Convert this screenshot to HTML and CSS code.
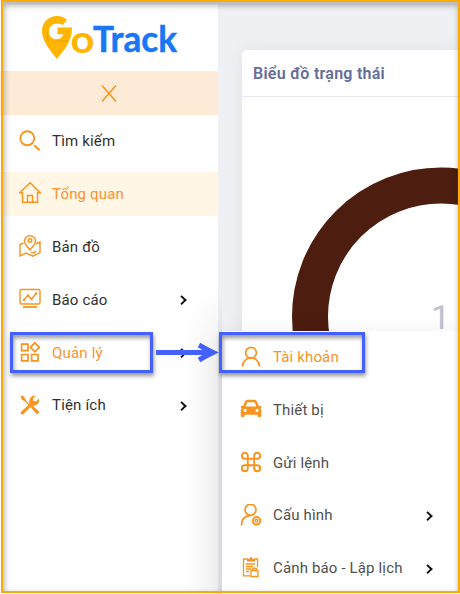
FILE: index.html
```html
<!DOCTYPE html>
<html lang="vi">
<head>
<meta charset="utf-8">
<title>GoTrack</title>
<link rel="stylesheet" href="styles.css">
</head>
<body>
<div class="app">
  <aside class="sidebar">
    <div class="brand">
      <svg class="logo" width="138" height="48" viewBox="0 0 138 48">
        <path class="pin" d="M25 6C21.500 2.800 18.500 2 15 2C6.500 2 0 8.500 0 17C0 27 8 36 14.800 45C22 36 30 28 30 13.500H15.500V20.300H21.500C20 23.500 17.500 25.300 14.500 25.300C10 25.300 7 22 7 17.500C7 13 10.500 9.500 15 9.500C17 9.500 19 10 20.500 11Z"/>
        <path class="pin-shade" d="M6.500 15C5.500 19 5.500 23 7 28L5.500 25C4.500 21 5 18 6.500 15ZM12 25.200C17 26.800 21 26.800 26 26.500L25 27.300C20 28 16 27 12 25.200Z"/>
        <text class="logo-o" x="28.500" y="38.500" textLength="24" lengthAdjust="spacingAndGlyphs">o</text>
        <text class="logo-track" x="51" y="38.300" textLength="84" lengthAdjust="spacingAndGlyphs">Track</text>
      </svg>
    </div>
    <div class="close"><svg width="16" height="17" viewBox="0 0 16 17"><path d="M1 .5L15 16.500M15 .5L1 16.500"/></svg></div>
    <nav class="menu">
      <a class="item"><svg class="icon" viewBox="0 0 22 22"><circle cx="8.300" cy="8.300" r="7" stroke-width="1.900"/><path stroke-width="2" d="M15.300 15.300L20.500 20.300"/></svg><span>Tìm kiếm</span></a>
      <a class="item active"><svg class="icon up" viewBox="0 0 22 22"><path d="M3.500 10.800H.8L11 .8 21.200 10.800H18.500V20.200H3.500ZM8.500 20V13.500H13.500V20"/></svg><span>Tổng quan</span></a>
      <a class="item"><svg class="icon up" viewBox="0 0 22 22"><path d="M11 15C8 11 5.500 9 5.500 6A5.500 5.200 0 0 1 16.500 6C16.500 9 14 11 11 15Z"/><circle cx="11" cy="5.500" r="1.800"/><path d="M4.500 8L1 9.500V21L7 18 14 21.200 21 17.500V7L17 9M12 17Q15 19 17 16"/></svg><span>Bản đồ</span></a>
      <a class="item"><svg class="icon up" viewBox="0 0 22 22"><rect x="1" y="1.500" width="20" height="14.500" rx="1.500"/><path d="M4 19H18" stroke-width="1.800"/><path d="M5 12L9 7.500 12.500 11 17 5.500"/><g class="solid"><circle cx="5" cy="12" r="1.200"/><circle cx="9" cy="7.500" r="1.200"/><circle cx="12.500" cy="11" r="1.200"/><circle cx="17" cy="5.500" r="1.200"/></g></svg><span>Báo cáo</span><i class="chevron"></i></a>
      <a class="item current"><svg class="icon up" viewBox="0 0 22 22"><path stroke-width="1.700" d="M2.600 3.200H9V9.600H2.600ZM2.600 13.500H9V19.900H2.600ZM12.600 13.500H19V19.900H12.600ZM15.900 1.800L20.400 6.300 15.900 10.800 11.400 6.300Z"/></svg><span>Quản lý</span><i class="chevron"></i></a>
      <a class="item"><svg class="icon" viewBox="0 0 22 22"><path class="solid" d="M1.500 1.500L5 2.500 7 6.500 10.500 10 9.500 11 6 7.500 2.500 5.500ZM11.500 13L13.500 11.500 20.500 18 18 20.500ZM1.800 18L10.500 10C9.500 5 12 1 17 1.500L14 4.500 14.500 7 17 7.500 20 4.500C21 9 17.500 12.500 13 11.500L4.200 20.300C2.500 21 1 19.500 1.800 18Z"/></svg><span>Tiện ích</span><i class="chevron"></i></a>
    </nav>
  </aside>
  <main class="content">
    <section class="card">
      <h2 class="card-title">Biểu đồ trạng thái</h2>
      <div class="chart">
        <svg width="218" height="300" viewBox="0 0 218 300"><circle class="ring" cx="199" cy="219.500" r="131"/><text class="total" x="189" y="232">1</text></svg>
      </div>
    </section>
  </main>
</div>
<div class="scroll-shade"></div>
<nav class="submenu">
  <a class="item current"><svg class="icon" viewBox="0 0 22 22"><circle cx="11" cy="6.700" r="5.400" stroke-width="1.700"/><path stroke-width="1.700" d="M2.500 20.500C3 9 19 9 19.500 20.500"/></svg><span>Tài khoản</span></a>
  <a class="item"><svg class="icon up" viewBox="0 0 22 22"><path class="solid" fill-rule="evenodd" d="M3.200 8L4.700 4Q5.500 1.700 8 1.700H14Q16.500 1.700 17.300 4L18.800 8H21V10H20.300L21.300 12V17.500Q21.300 19.300 19.300 19.300 17.300 19.300 17.300 16.800H4.700Q4.700 19.300 2.700 19.300 .7 19.300 .7 17.500V12L1.700 10H1V8ZM5.700 8.500H16.300L15 5Q14.700 4.300 14 4.300H8Q7.300 4.300 7 5ZM5 10.800A1.600 1.600 0 1 0 5 14 1.600 1.600 0 1 0 5 10.800ZM17 10.800A1.600 1.600 0 1 0 17 14 1.600 1.600 0 1 0 17 10.800Z"/></svg><span>Thiết bị</span></a>
  <a class="item"><svg class="icon up" viewBox="0 0 22 22"><path stroke-width="1.900" d="M7.800 7.800V4.800A3 3 0 1 0 4.800 7.800H17.200A3 3 0 1 0 14.200 4.800V17.200A3 3 0 1 0 17.200 14.200H4.800A3 3 0 1 0 7.800 17.200Z"/></svg><span>Gửi lệnh</span></a>
  <a class="item"><svg class="icon" viewBox="0 0 22 22"><circle cx="10.500" cy="5.800" r="5.500" stroke-width="1.700"/><path stroke-width="1.700" d="M1.500 21.500C1.500 15.500 4.500 12 10 11.700"/><circle cx="16.500" cy="16.800" r="3.600" stroke-width="1.700"/><circle cx="16.500" cy="16.800" r="1.300"/><circle cx="16.500" cy="16.800" r="4.400" stroke-width="1" stroke-dasharray="2 1.450"/></svg><span>Cấu hình</span><i class="chevron"></i></a>
  <a class="item"><svg class="icon up" viewBox="0 0 22 22"><path stroke-width="1.300" d="M8 3H3.500V19.800H10M14 3H17.500V11M6 8H15M6 10.500H13M6 13H11M6 15.500H9"/><path class="solid" d="M7 5.500V3H9.500Q9.500 1 11 1T12.500 3H15V5.500Z"/><path stroke-width="1.300" d="M11 14.500H18V20.500H11ZM12.500 14.500V13L14.500 12 16.500 13V14.500"/></svg><span>Cảnh báo - Lập lịch</span><i class="chevron"></i></a>
</nav>
<div class="mark mark-parent"></div>
<div class="mark mark-child"></div>
<svg class="arrow" width="64" height="22" viewBox="0 0 64 22"><path d="M0 11.500H52"/><path d="M43 4L56 11.500 43 19"/><path class="tip" d="M47 4L63 11.500 47 19V12Z"/></svg>
<div class="frame"></div>
</body>
</html>
```

FILE: styles.css
```css
* { box-sizing: border-box; }
body {
  margin: 0;
  width: 460px;
  height: 594px;
  position: relative;
  overflow: hidden;
  background: #e4e4e6;
  font: 15px/20px Roboto, "Noto Sans", sans-serif;
}
.app { display: flex; height: 594px; }
.sidebar { width: 218px; flex: none; background: #fff; }
.brand { width: 219px; height: 71px; padding: 14px 0 0 42px; background: #fff; }
.logo { display: block; overflow: visible; }
.pin { fill: #ffb400; }
.pin-shade { fill: #c98c10; opacity: .6; }
.logo text { font-family: Lato, sans-serif; font-weight: 700; }
.logo-o { font-size: 39px; fill: #ffb400; }
.logo-track { font-size: 37px; fill: #1976f5; stroke: #1976f5; stroke-width: .5; }
.close { height: 44px; display: flex; align-items: center; justify-content: center; background: #fdebd7; }
.close svg { fill: none; stroke: #f7931e; stroke-width: 1.5; }
.menu { display: flex; flex-direction: column; gap: 8.9px; padding-top: 4px; }
.item {
  height: 44px;
  display: flex;
  align-items: center;
  gap: 11px;
  padding: 0 32px 0 19px;
  color: #303030;
  letter-spacing: .18px;
  white-space: nowrap;
}
.icon { width: 22px; height: 22px; flex: none; fill: none; stroke: #f7931e; stroke-width: 1.4; }
.up { margin-top: -2px; }
.solid { fill: #f7931e; stroke: none; }
.active { background: #fff6e6; }
.active, .current { color: #f79433; }
.chevron {
  width: 6.5px;
  height: 6.5px;
  margin-left: auto;
  margin-right: 1px;
  border: solid #111;
  border-width: 2px 2px 0 0;
  transform: translate(-.5px, .5px) rotate(45deg);
}
.content { flex: 1; min-width: 0; padding: 50px 0 0 24px; background: #eff0f4; }
.card { height: 544px; background: #fff; border-radius: 5px 0 0; box-shadow: 0 0 18px rgba(70, 80, 120, .08); }
.card-title {
  margin: 0;
  height: 47px;
  padding: 14px 11px;
  border-bottom: 1px solid #e6e7f0;
  color: #646c9a;
  font-size: 16px;
  font-weight: 600;
  line-height: 20px;
  letter-spacing: .26px;
}
.chart svg { display: block; }
.ring { fill: none; stroke: #4d1d0f; stroke-width: 36; }
.total { fill: #bfc0d0; font-size: 34px; }
.scroll-shade {
  position: absolute;
  left: 186px;
  top: 290px;
  width: 36px;
  height: 304px;
  background: linear-gradient(90deg, transparent, rgba(0, 0, 0, .065));
  -webkit-mask-image: linear-gradient(transparent, #000 60px);
  mask-image: linear-gradient(transparent, #000 60px);
}
.submenu {
  position: absolute;
  left: 222px;
  top: 331px;
  width: 238px;
  height: 263px;
  padding-top: 4px;
  display: flex;
  flex-direction: column;
  gap: 8.8px;
  background: #fff;
  box-shadow: 0 0 18px rgba(0, 0, 0, .06);
}
.submenu .item { flex: none; padding: 0 28px 0 18px; color: #505050; letter-spacing: .15px; }
.submenu .item.current { color: #f7931e; }
.mark {
  position: absolute;
  top: 332px;
  height: 41px;
  border: 3px solid #4460ff;
  box-shadow: 1px 3px 4px rgba(0, 0, 0, .4), inset 1px 3px 4px rgba(0, 0, 0, .4);
}
.mark-parent { left: 10px; width: 143px; }
.mark-child { left: 219px; width: 146px; }
.arrow { position: absolute; left: 156px; top: 341px; fill: none; stroke: #4460ff; stroke-width: 5; }
.arrow .tip { fill: #4460ff; stroke: none; }
.frame {
  position: absolute;
  left: 1px;
  top: 0;
  width: 459px;
  height: 593px;
  border: 2px solid #f9ab08;
  box-shadow: inset 0 2px 1px #bcbdbf, inset 1px 3px 6px rgba(0, 0, 0, .35);
}
```
